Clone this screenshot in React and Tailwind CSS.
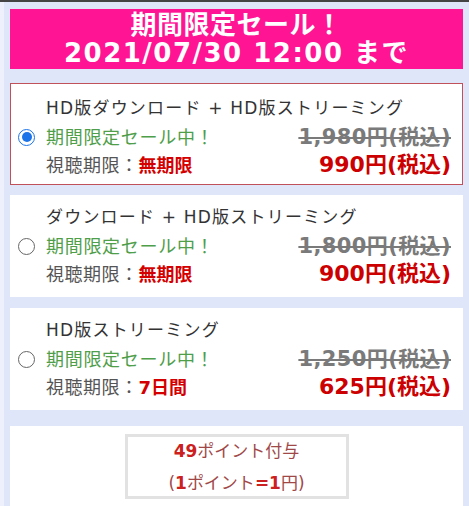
import React from 'react';

const font = { fontFamily: '"DejaVu Sans", "Noto Sans CJK JP", sans-serif' };

const plans = [
    { title: 'HD版ダウンロード + HD版ストリーミング', list: '1,980円(税込)', price: '990円(税込)', limit: '無期限', selected: true },
    { title: 'ダウンロード + HD版ストリーミング', list: '1,800円(税込)', price: '900円(税込)', limit: '無期限' },
    { title: 'HD版ストリーミング', list: '1,250円(税込)', price: '625円(税込)', limit: '7日間' },
];

function Radio({ on }) {
    return on ? (
        <span className="w-[17px] h-[17px] rounded-full border-[1.5px] border-[#1a73e8] flex items-center justify-center">
            <span className="w-[10px] h-[10px] rounded-full bg-[#1a73e8]" />
        </span>
    ) : (
        <span className="w-[17px] h-[17px] rounded-full border-[1.5px] border-[#666] bg-white" />
    );
}

function PlanCard({ plan, className }) {
    return (
        <div
            className={
                'h-[102px] bg-white border pl-[7px] pr-[11px] ' +
                (plan.selected ? 'border-[#c0505a] pt-[10px] ' : 'border-white pt-[7px] ') +
                className
            }
        >
            <div className="pl-[28px] h-[29px] leading-[29px] text-[17px] text-[#333] tracking-[1.2px]">{plan.title}</div>
            <div className="flex items-center h-[28px]">
                <Radio on={plan.selected} />
                <span className="ml-[11px] text-[18px] text-[#4f9e4a] tracking-[0.7px]">期間限定セール中！</span>
                <span className="ml-auto text-[21px] leading-[28px] font-bold text-[#7a7a7a] line-through decoration-2 tracking-[0.4px]">{plan.list}</span>
            </div>
            <div className="flex items-center h-[28px] pl-[28px]">
                <span className="text-[18px] text-[#555] tracking-[0.5px]">視聴期限：</span>
                <span className="text-[18px] font-bold text-[#d40000]">{plan.limit}</span>
                <span className="ml-auto text-[22px] leading-[28px] font-bold text-[#cc0000]">{plan.price}</span>
            </div>
        </div>
    );
}

export default function App() {
    return (
        <div style={font} className="w-[469px] h-[506px] overflow-hidden bg-[#dfe6fa] border-t-2 border-[#444]">
            <div className="border-l-4 border-[#eef1fc] h-full pl-[6px] pr-[6px] pt-[7px]">
                <div className="h-[60px] bg-[#ff1493] flex flex-col items-center justify-center text-white font-bold text-[26px] leading-[28px]">
                    <div className="tracking-[0.5px]">期間限定セール！</div>
                    <div className="tracking-[1.5px]">2021/07/30 12:00 まで</div>
                </div>

                <PlanCard plan={plans[0]} className="mt-[14px]" />
                <PlanCard plan={plans[1]} className="mt-[10px]" />
                <PlanCard plan={plans[2]} className="mt-[11px]" />

                <div className="mt-[16px] h-[100px] bg-white pt-[8px] flex justify-center">
                    <div className="w-[224px] h-[65px] border-[3px] border-[#e2e2e2] flex flex-col items-center justify-center text-[17px] leading-[32px] text-[#a04848]">
                        <div>
                            <span className="font-bold text-[#cc2020]">49</span>ポイント付与
                        </div>
                        <div>
                            (<span className="font-bold text-[#cc2020]">1</span>ポイント<span className="font-bold text-[#cc2020]">=1</span>円)
                        </div>
                    </div>
                </div>
            </div>
        </div>
    );
}
